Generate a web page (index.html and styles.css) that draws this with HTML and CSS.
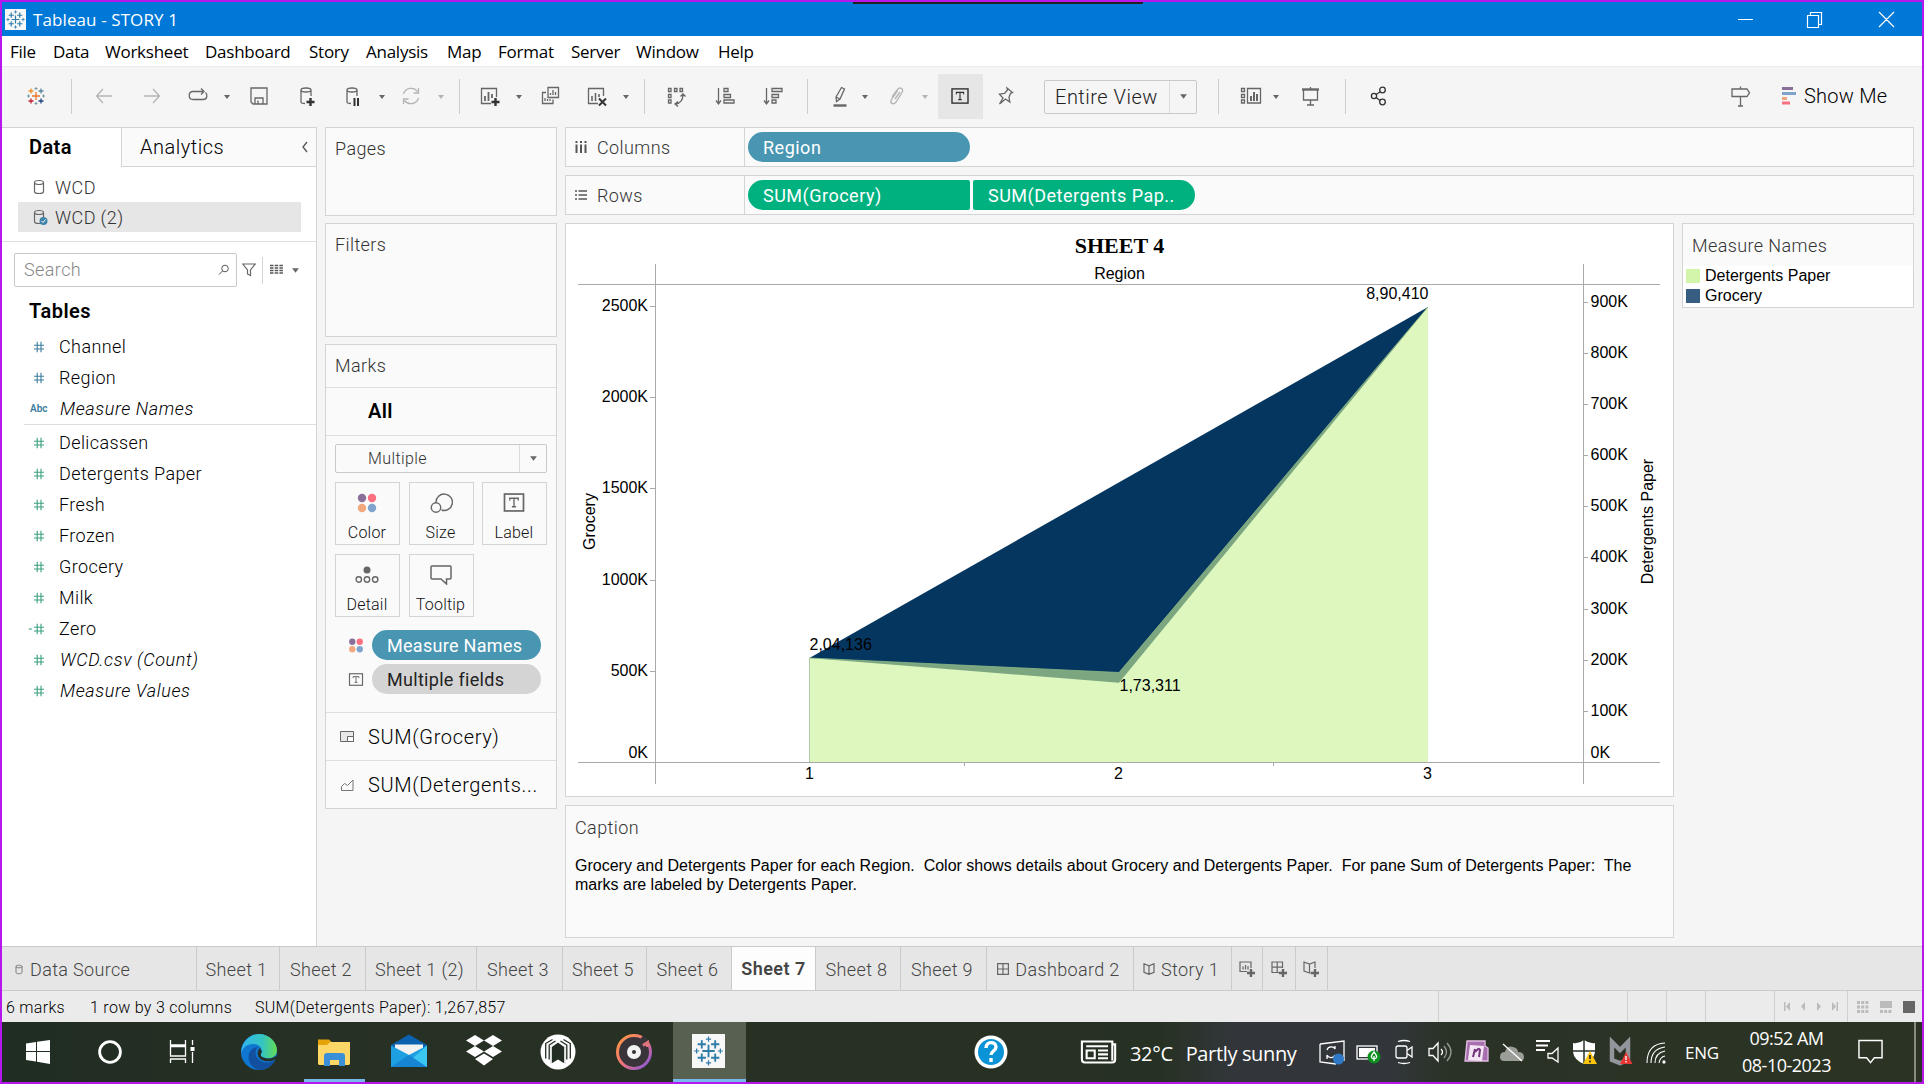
FILE: index.html
```html
<!DOCTYPE html>
<html lang="en">
<head>
<meta charset="utf-8">
<title>Tableau - STORY 1</title>
<link rel="stylesheet" href="styles.css">
</head>
<body>
<svg width="0" height="0" class="defs">
  <defs>
    <symbol id="caret" viewBox="0 0 8 6"><path d="M1 1h6L4 5z" fill="currentColor"/></symbol>
    <symbol id="hash" viewBox="0 0 12 12"><path d="M1 4.2h10M1 8h10M4.2 .8v10.4M8 .8v10.4" fill="none" stroke="currentColor" stroke-width="1.1"/></symbol>
    <symbol id="cyl" viewBox="0 0 12 16"><path d="M1.5 3.5v9c0 1.2 2 2 4.500 2s4.500-.8 4.500-2v-9M1.500 3.500c0-1.200 2-2 4.500-2s4.500.8 4.500 2-2 2-4.500 2-4.500-.8-4.500-2z" fill="none" stroke="currentColor" stroke-width="1.200"/></symbol>
    <symbol id="tbox" viewBox="0 0 20 18"><rect x="1" y="1" width="18" height="16" fill="none" stroke="currentColor" stroke-width="1.600"/><path d="M6 7V5h8v2M10 5v8M8 13h4" fill="none" stroke="currentColor" stroke-width="1.300"/></symbol>
    <symbol id="dots" viewBox="0 0 20 20"><circle cx="5" cy="5" r="4.200" fill="#8a7099"/><circle cx="15" cy="5" r="4.200" fill="#fa7080"/><circle cx="5" cy="15" r="4.200" fill="#f2a77e"/><circle cx="15" cy="15" r="4.200" fill="#80a3cc"/></symbol>
    <symbol id="mark" viewBox="-16 -16 32 32"><path d="M0-6V6M-6 0H6M-6.500-10.500v8M-10.500-6.500h8M6.500-10.500v8M2.500-6.500h8M-6.500 2.500v8M-10.500 6.500h8M6.500 2.500v8M2.500 6.500h8" fill="none" stroke="#2f7ca8" stroke-width="1.800"/><path d="M0-14v5M-2.500-11.500h5M0 9v5M-2.500 11.500h5M-11.500-2.500v5M-14 0h5M11.500-2.500v5M9 0h5" fill="none" stroke="#2f7ca8" stroke-width="1.200"/></symbol>
  </defs>
</svg>

<div class="window">
  <header class="titlebar">
    <svg class="app-icon" width="21" height="21" viewBox="0 0 21 21"><rect width="21" height="21" fill="#f8f8f8"/><use href="#mark" x="0" y="0" width="21" height="21"/></svg>
    <span class="app-title">Tableau - STORY 1</span>
    <svg class="controls" width="170" height="24" viewBox="0 0 170 24" fill="none" stroke="#fff" stroke-width="1.200"><path d="M2 12.500h15M71.500 8.500h11v12h-11zM74.500 8V5.500h11v12H83M143 5l15 15M158 5l-15 15"/></svg>
    <i class="notch"></i>
  </header>

  <nav class="menu"><span>File</span><span>Data</span><span>Worksheet</span><span>Dashboard</span><span>Story</span><span>Analysis</span><span>Map</span><span>Format</span><span>Server</span><span>Window</span><span>Help</span></nav>

  <div class="toolbar">
    <svg viewBox="0 0 24 24" fill="none" stroke-width="1.400"><path d="M12 8v8M8 12h8" stroke="#e8762c"/><path d="M7 4.500v5M4.500 7h5" stroke="#eb912c"/><path d="M17 4.500v5M14.500 7h5" stroke="#59879b"/><path d="M7 14.500v5M4.500 17h5" stroke="#c72035"/><path d="M17 14.500v5M14.500 17h5" stroke="#1f457e"/><path d="M12 3v3M10.500 4.500h3M12 18v3M10.500 19.500h3M4.500 10.500v3M3 12h3M19.500 10.500v3M18 12h3" stroke="#7199a6" stroke-width="1"/></svg>
    <i class="sep"></i>
    <svg class="dim" viewBox="0 0 24 24" stroke-width="2"><path d="M20 12H5M11 5l-6.500 7L11 19"/></svg>
    <svg class="dim" viewBox="0 0 24 24" stroke-width="2"><path d="M4 12h15M13 5l6.500 7L13 19"/></svg>
    <svg viewBox="0 0 24 24"><path d="M7 7.500h10M15 4.500l3 3-3 3M7 7.500c-5 0-5 8 0 8h10c4.500 0 4.800-5 2.500-7"/></svg>
    <svg class="caret"><use href="#caret"/></svg>
    <svg viewBox="0 0 24 24"><path d="M4 4h16v16H6l-2-2zM8 20v-6h8v6M11 16.500V20"/></svg>
    <svg viewBox="0 0 24 24"><path d="M6 6v12c0 1 2 1.500 4 1.500M16 6v6M6 6c0-1.300 2-2 5-2s5 .7 5 2-2 2-5 2-5-.7-5-2z"/><path d="M11.500 18h8M15.500 14v8" stroke="#333" stroke-width="2.400"/></svg>
    <svg viewBox="0 0 24 24"><path d="M6 6v12c0 1 2 1.500 4 1.500M16 6v6M6 6c0-1.300 2-2 5-2s5 .7 5 2-2 2-5 2-5-.7-5-2z"/><path d="M13.500 14v8M17 14v8" stroke="#333" stroke-width="2"/></svg>
    <svg class="caret"><use href="#caret"/></svg>
    <svg class="dim" viewBox="0 0 24 24"><path d="M4.500 10A8 8 0 0 1 18.500 7.500M19.500 14A8 8 0 0 1 5.500 16.500M19.500 4v5h-5M4.500 20v-5h5"/></svg>
    <svg class="caret dim"><use href="#caret"/></svg>
    <i class="sep"></i>
    <svg viewBox="0 0 24 24"><path d="M13 19.500H3.500V4.500h15V13"/><path d="M7 17v-5M10.500 17V8M14 14v-4" stroke-width="1.800"/><path d="M13.500 18h8M17.500 14v8" stroke="#333" stroke-width="2.400"/></svg>
    <svg class="caret"><use href="#caret"/></svg>
    <svg viewBox="0 0 24 24"><path d="M10 3.500h10.500v10H10zM8 8.500H4.500v11H15V15.500M12.500 11V9M15 11V6M17.500 11V8M7 17v-3M9.500 17v-2M12 17v-2"/></svg>
    <svg viewBox="0 0 24 24"><path d="M13 19.500H3.500V4.500h15V12"/><path d="M7 17v-5M10.500 17V9M14 13v-3" stroke-width="1.600"/><path d="M14 14.500l7 7M21 14.500l-7 7" stroke="#333" stroke-width="2"/></svg>
    <svg class="caret"><use href="#caret"/></svg>
    <i class="sep"></i>
    <svg viewBox="0 0 24 24"><path d="M4.500 4.500h2.500v3h-2.500zM10.500 4.500h2.500v3h-2.500zM16 4.500h2.500v3H16zM4.500 10.500h2.500v3h-2.500zM4.500 16h2.500v3h-2.500zM19 11c0 5-3 8.500-7 9M16.500 12.500L19 10l2.500 2.500M14 17.500L11 20l3 2.500"/></svg>
    <svg viewBox="0 0 24 24"><path d="M5.500 4v15M3 16.500L5.500 20 8 16.500M11 4.500h4v3h-4zM11 10.500h6.500v3H11zM11 16h10v3H11z"/></svg>
    <svg viewBox="0 0 24 24"><path d="M5.500 4v15M3 16.500L5.500 20 8 16.500M11 4.500h10v3H11zM11 10.500h6.500v3H11zM11 16h4v3h-4z"/></svg>
    <i class="sep"></i>
    <svg viewBox="0 0 24 24"><path d="M8 13L13.500 3.500l3 1.500L12 15l-3.500 2.500zM8 13l4 2"/><path d="M5.500 21.500h13" stroke-width="2.400"/></svg>
    <svg class="caret"><use href="#caret"/></svg>
    <svg class="dim" viewBox="0 0 24 24"><path d="M7 13l5.500-7.500c3-3.500 6.500 0 4.500 3L11 18c-3 3.500-6.500 1-4.500-2.500L12.500 7M10 15l5-7"/></svg>
    <svg class="caret dim"><use href="#caret"/></svg>
    <span class="tool-on"><svg viewBox="0 0 20 18"><use href="#tbox"/></svg></span>
    <svg viewBox="0 0 24 24"><path d="M14 4l5.500 4.500-2 .8-1.500 4 .8 4.700-4.300-3L6.500 20l3.500-6-3.500-3.800 5-.7L14.500 6z"/></svg>
    <div class="fit"><span>Entire View</span><b><svg class="caret big"><use href="#caret"/></svg></b></div>
    <i class="sep"></i>
    <svg viewBox="0 0 24 24"><path d="M3.500 4.500h3v3h-3zM3.500 10.500h3v3h-3zM3.500 16h3v3h-3zM9.500 4.500h13v14.500h-13z"/><path d="M13 17v-5M16 17V8M19 17v-7" stroke-width="2"/></svg>
    <svg class="caret"><use href="#caret"/></svg>
    <svg viewBox="0 0 24 24"><path d="M5.500 6v10h14V6M12.500 16v4.500M9 21h7M12.500 3v2"/><path d="M4 5.500h17" stroke-width="2.400"/></svg>
    <i class="sep"></i>
    <svg viewBox="0 0 24 24" class="dark"><circle cx="8" cy="12" r="2.600"/><circle cx="16.500" cy="6" r="2.800"/><circle cx="16.500" cy="18" r="2.800"/><path d="M10 10.500L14 8M10 13.500l4 3"/></svg>
    <svg viewBox="0 0 24 24"><path d="M4 5h15l2.500 3.800L19 12.500H4zM12.500 2.500V5M12.500 12.500V22M10 22h5"/></svg>
    <div class="showme"><svg viewBox="0 0 14 18"><path d="M0 1.500h11" stroke="#8a7099"/><path d="M0 6.500h14" stroke="#80a3cc"/><path d="M0 11.500h5" stroke="#f2a77e"/><path d="M0 16h8" stroke="#fa7080"/></svg><span>Show Me</span></div>
  </div>

  <main class="work">
    <aside class="side">
      <div class="side-tabs"><b>Data</b><span>Analytics<svg width="8" height="12" viewBox="0 0 8 12"><path d="M6 1L2 6l4 5" fill="none" stroke="#555" stroke-width="1.300"/></svg></span></div>
      <div class="sources">
        <div class="source"><svg width="12" height="16"><use href="#cyl"/></svg>WCD</div>
        <div class="source picked"><svg width="16" height="17" viewBox="0 0 16 17"><use href="#cyl" width="12" height="16"/><circle cx="10.500" cy="12" r="4" fill="#3d84a8"/><path d="M8.500 12l1.500 1.500 2.500-3" stroke="#fff" fill="none"/></svg>WCD (2)</div>
      </div>
      <div class="search-row">
        <div class="search"><span>Search</span><svg width="12" height="12" viewBox="0 0 12 12" fill="none" stroke="#555"><circle cx="7" cy="4.500" r="3.300"/><path d="M4.500 7L1 10.500"/></svg></div>
        <svg width="14" height="14" viewBox="0 0 14 14"><path d="M.8 1h12.400L8.500 7v5.500l-3-1.500V7z" fill="none" stroke="#666" stroke-width="1.200"/></svg>
        <i></i>
        <svg width="13" height="12" viewBox="0 0 13 12"><path d="M0 1.500h13M0 4h13M0 6.500h13M0 9h13" stroke="#555" stroke-width="1.300" stroke-dasharray="3.500 1.200"/></svg>
        <svg class="caret big"><use href="#caret"/></svg>
      </div>
      <h2>Tables</h2>
      <ul class="fields dims">
        <li><svg><use href="#hash"/></svg>Channel</li>
        <li><svg><use href="#hash"/></svg>Region</li>
        <li><small>Abc</small><em>Measure Names</em></li>
      </ul>
      <ul class="fields measures">
        <li><svg><use href="#hash"/></svg>Delicassen</li>
        <li><svg><use href="#hash"/></svg>Detergents Paper</li>
        <li><svg><use href="#hash"/></svg>Fresh</li>
        <li><svg><use href="#hash"/></svg>Frozen</li>
        <li><svg><use href="#hash"/></svg>Grocery</li>
        <li><svg><use href="#hash"/></svg>Milk</li>
        <li class="calc"><svg><use href="#hash"/></svg>Zero</li>
        <li><svg><use href="#hash"/></svg><em>WCD.csv (Count)</em></li>
        <li><svg><use href="#hash"/></svg><em>Measure Values</em></li>
      </ul>
    </aside>

    <section class="cards">
      <div class="card pages">Pages</div>
      <div class="card filters">Filters</div>
      <div class="card marks">
        <div class="marks-head">Marks</div>
        <div class="marks-all">All</div>
        <div class="mark-type"><span>Multiple</span><b><svg class="caret big"><use href="#caret"/></svg></b></div>
        <div class="mark-grid">
          <div><svg width="20" height="20"><use href="#dots"/></svg>Color</div>
          <div><svg width="24" height="22" viewBox="0 0 24 22" fill="none" stroke="#666" stroke-width="1.400"><path d="M7 10.500A8.200 8.200 0 1 1 12.500 18"/><circle cx="7" cy="15.500" r="4.700"/></svg>Size</div>
          <div><svg width="22" height="19"><use href="#tbox"/></svg>Label</div>
          <div><svg width="24" height="18" viewBox="0 0 24 18" fill="none" stroke="#666" stroke-width="1.400"><circle cx="12" cy="4" r="3.500" fill="#666" stroke="none"/><circle cx="3.800" cy="13.500" r="2.700"/><circle cx="12" cy="13.500" r="2.700"/><circle cx="20.200" cy="13.500" r="2.700"/></svg>Detail</div>
          <div><svg width="22" height="20" viewBox="0 0 22 20" fill="none" stroke="#666" stroke-width="1.500"><path d="M2 1h18a1 1 0 0 1 1 1v11a1 1 0 0 1-1 1h-3.500v5L11 14H2a1 1 0 0 1-1-1V2a1 1 0 0 1 1-1z"/></svg>Tooltip</div>
        </div>
        <div class="mark-pills">
          <div><svg width="15" height="15"><use href="#dots"/></svg><span class="pill blue">Measure Names</span></div>
          <div><svg width="14" height="13"><use href="#tbox"/></svg><span class="pill gray">Multiple fields</span></div>
        </div>
        <div class="mark-sub"><svg width="14" height="11" viewBox="0 0 14 11" fill="#e8e8e8" stroke="#666"><path d="M.5.500h13v10H.500z"/><path d="M7.500 10.500v-5h6v5z" fill="#fff"/></svg>SUM(Grocery)</div>
        <div class="mark-sub"><svg width="14" height="12" viewBox="0 0 14 12" fill="none" stroke="#777"><path d="M1.500 11.500V7.500l3-3 3 2 5.500-5.500v10.500z"/></svg>SUM(Detergents...</div>
      </div>
    </section>

    <section class="canvas">
      <div class="card shelf"><div><svg width="12" height="12" viewBox="0 0 12 12" stroke="#555" stroke-width="2" stroke-dasharray="2 1.500 9"><path d="M1.500 0v12M6 0v12M10.500 0v12"/></svg>Columns</div><span class="pill blue wide">Region</span></div>
      <div class="card shelf"><div><svg width="12" height="10" viewBox="0 0 12 10" stroke="#555" stroke-width="1.600" stroke-dasharray="2 1.500 9"><path d="M0 1h12M0 5h12M0 9h12"/></svg>Rows</div><span class="pill green wide first">SUM(Grocery)</span><span class="pill green wide last">SUM(Detergents Pap..</span></div>
      <div class="view">
        <div class="view-main">
          <svg class="chart" width="1109" height="574" viewBox="565 223 1109 574">
            <rect x="565.500" y="223.500" width="1108" height="573" fill="#fff" stroke="#d4d4d4"/>
            <path d="M809.500 658L1428 307V762H809.500z" fill="#05365f"/>
            <path d="M809.500 658L1119 672.500 1428 307V762H809.500z" fill="#7ba680"/>
            <path d="M809.500 658L1119 682.800 1428 307V762H809.500z" fill="#ddf7bf"/>
            <path d="M809.500 658L1119 672.500 1428 307" fill="none" stroke="#8fbc86" stroke-width=".8"/>
            <g stroke="#a9a9a9" fill="none"><path d="M578 284.500h1082M578 762.500h1082M655.500 264v520M1583.500 264v520"/>
            <path d="M650 306.500h5M650 397.500h5M650 488.500h5M650 580.500h5M650 671.500h5M1584 302.500h4M1584 353.500h4M1584 404.500h4M1584 455.500h4M1584 506.500h4M1584 557.500h4M1584 609.500h4M1584 660.500h4M1584 711.500h4M964.500 763v3M1273.500 763v3"/></g>
            <text x="1119.500" y="252.500" text-anchor="middle" class="sheet-title">SHEET 4</text>
            <g text-anchor="middle"><text x="1119.500" y="279">Region</text><text x="809.500" y="779">1</text><text x="1118.500" y="779">2</text><text x="1427.500" y="779">3</text>
            <text transform="translate(595 521.500) rotate(-90)">Grocery</text><text transform="translate(1653 521.500) rotate(-90)">Detergents Paper</text></g>
            <g text-anchor="end"><text x="648" y="311">2500K</text><text x="648" y="402">2000K</text><text x="648" y="493">1500K</text><text x="648" y="585">1000K</text><text x="648" y="676">500K</text><text x="648" y="758">0K</text><text x="1428.500" y="299">8,90,410</text></g>
            <g><text x="1590.500" y="307">900K</text><text x="1590.500" y="358">800K</text><text x="1590.500" y="409">700K</text><text x="1590.500" y="460">600K</text><text x="1590.500" y="511">500K</text><text x="1590.500" y="562">400K</text><text x="1590.500" y="614">300K</text><text x="1590.500" y="665">200K</text><text x="1590.500" y="716">100K</text><text x="1590.500" y="758">0K</text><text x="809.500" y="650">2,04,136</text><text x="1119.500" y="691">1,73,311</text></g>
          </svg>
          <div class="card caption"><h3>Caption</h3><p>Grocery and Detergents Paper for each Region.&nbsp; Color shows details about Grocery and Detergents Paper.&nbsp; For pane Sum of Detergents Paper:&nbsp; The<br>marks are labeled by Detergents Paper.</p></div>
        </div>
        <div class="card legend"><h3>Measure Names</h3><div><i class="lime"></i>Detergents Paper</div><div><i class="navy"></i>Grocery</div></div>
      </div>
    </section>
  </main>

  <div class="tabs">
    <span><svg width="8" height="11" viewBox="0 0 12 16"><use href="#cyl"/></svg>Data Source</span><span>Sheet 1</span><span>Sheet 2</span><span>Sheet 1 (2)</span><span>Sheet 3</span><span>Sheet 5</span><span>Sheet 6</span><span class="active">Sheet 7</span><span>Sheet 8</span><span>Sheet 9</span>
    <span class="ic"><svg width="12" height="12" viewBox="0 0 12 12"><path d="M.6.6h10.800v10.800H.600zM6 .6v10.800M.6 6h10.800"/></svg>Dashboard 2</span>
    <span class="ic"><svg width="12" height="12" viewBox="0 0 12 12"><path d="M1 .8l5 2 5-2v8.500l-5 2-5-2zM6 3v8"/></svg>Story 1</span>
    <span class="add"><svg width="17" height="17" viewBox="0 0 17 17"><path d="M8 10.500H1V1h11v6M4 8.500v-3M6.500 8.500V4M9 8.500V5"/><path d="M8 12h8M12 8v8" class="plus"/></svg></span>
    <span class="add"><svg width="17" height="17" viewBox="0 0 17 17"><path d="M8 11.500H1V1h10.500v6M6.200 1v10M1 6.200h10.500"/><path d="M8 12h8M12 8v8" class="plus"/></svg></span>
    <span class="add"><svg width="17" height="17" viewBox="0 0 17 17"><path d="M8 12L6.500 12 1 10V1l5.500 2L12 1v6M6.500 3v9"/><path d="M8 12h8M12 8v8" class="plus"/></svg></span>
  </div>

  <footer class="status">
    <span>6 marks</span><span>1 row by 3 columns</span><span>SUM(Detergents Paper): 1,267,857</span>
    <i></i><i></i><i></i><i></i>
    <i><svg width="54" height="9" viewBox="0 0 54 9" fill="#bbb"><path d="M0 0h1.500v9H0zM6 0v9L2 4.500zM21 0v9l-4-4.500zM33 0v9l4-4.500zM48 0v9l4-4.500zM52.500 0H54v9h-1.500z"/></svg></i>
    <i class="modes"><svg width="58" height="12" viewBox="0 0 58 12"><path d="M0 1.600h12M0 6h12M0 10.400h12" stroke="#bbb" stroke-width="3" stroke-dasharray="3 1.200"/><path d="M23 0h12v7H23z" fill="#bbb"/><path d="M23 10.400h12" stroke="#bbb" stroke-width="3" stroke-dasharray="3 1.200"/><path d="M46 0h12v12H46z" fill="#666"/></svg></i>
  </footer>

  <div class="taskbar">
    <svg viewBox="-20 -20 40 40" fill="#fff"><path d="M-12-8.500L-2-10V-1H-12zM-1-10.200L12-12V-1H-1zM-12 0H-2V9.500L-12 8zM-1 0H12V12L-1 9.800z"/></svg>
    <svg viewBox="-20 -20 40 40" fill="none" stroke="#fff" stroke-width="2.800"><circle r="10.400"/></svg>
    <svg viewBox="-20 -20 40 40" fill="none" stroke="#fff" stroke-width="1.300"><path d="M-11.500-12v5H3.500v-5M-11.500 11V7H3.500v4M-11.500-5.500H3.500v9.500h-15zM10.500-12V-7M10.500 0v11"/><path d="M8.500-5h4v4h-4z" fill="#fff" stroke="none"/></svg>
    <svg viewBox="-20 -20 40 40"><defs><linearGradient id="eg" x1="0" x2="1"><stop offset="0" stop-color="#32b4ef"/><stop offset=".6" stop-color="#35c5c0"/><stop offset="1" stop-color="#62dd52"/></linearGradient></defs><circle r="18" fill="#0f77d0"/><path d="M-17.900 2C-18-10-9-18 0-18 10-18 18-10 18-2 18 4 13 7 7 6 1 5 1 3 3 0 3-6-2-8-6-8-12-8-17-4-17.900 2z" fill="url(#eg)"/><path d="M-10 2C-8-4-3-5-1-5-6 0-3 8 4 10c5 1.500 9 0 12-2C13 15 6 18 1 18-7 17-12 9-10 2z" fill="#124f9e"/><path d="M1-4C-3 0-2 6 4 8.500c5 1.500 8 1 12-1 3-1 3 1 2 3L16 14 19 6 17 4C13 7 9 7 6 6 1 5 1 2 3 0z" fill="#263024"/></svg>
    <svg viewBox="-20 -20 40 40"><path d="M-16-12.500h11l3 3h14q4 0 4 4V11q0 2-2 2h-28q-2 0-2-2z" fill="#e5a50a"/><path d="M-16-7h9l3-3H16V11q0 2-2 2h-28q-2 0-2-2z" fill="#ffd766"/><path d="M-10 14V4q0-3 3-3H8q3 0 3 3v10H5V8H-4v6z" fill="#3a8fd8"/></svg>
    <svg viewBox="-20 -20 40 40"><path d="M-18-7L0-17.500 18-7V15H-18z" fill="#0a62ae"/><path d="M-14-7.500H14V6H-14z" fill="#f2f2f2"/><path d="M-18-6.500L0 3 18-6.500V15H-18z" fill="#1d9fe2"/><path d="M18-6.500L-6 15H18z" fill="#3cc6f2"/><path d="M-18 15L0 3 18 15z" fill="#1686d4"/></svg>
    <svg viewBox="-20 -20 40 40" fill="#fff"><path d="M-9-17L0-11.500-9-6-18-11.500zM9-17L18-11.500 9-6 0-11.500zM-9-6L0-.5-9 5-18-.5zM9-6L18-.5 9 5 0-.5zM0 1.500L9 7 0 13.500-9 7z"/></svg>
    <svg viewBox="-20 -20 40 40" fill="none" stroke="#222d23"><circle r="17.500" fill="#fff" stroke="none"/><path d="M-7.500 12V-6L0-11 7.500-6V12L0 7.500z" fill="#222d23" stroke="none"/><path d="M-7 12.500V-5.500L0-10.500 7-5.500V12.500" stroke="#fff" stroke-width="1.600"/><path d="M-8.800 7.500V-7L-2.500-11M-12.300 6.500V-8.500L-5.500-12.500M8.800 7.500V-7L2.500-11M12.300 6.500V-8.500L5.500-12.500" stroke-width="1.300"/></svg>
    <svg viewBox="-20 -20 40 40"><defs><linearGradient id="gr" x2="1" y2="1"><stop stop-color="#ff9a3d"/><stop offset=".5" stop-color="#f0737b"/><stop offset="1" stop-color="#7a55e0"/></linearGradient></defs><circle r="16.500" fill="#39343a" stroke="url(#gr)" stroke-width="3"/><path d="M8-15L14-9" stroke="#39343a" stroke-width="4"/><circle r="7" fill="#f3f3f3"/><circle r="2" fill="#333"/><path d="M9-6.500L13.500-9.500V-5" stroke="#e0737b" stroke-width="3" fill="none"/></svg>
    <span class="task-on"><svg viewBox="0 0 33 34"><rect width="33" height="34" fill="#f7f7f7"/><use href="#mark" x="0" y="0" width="33" height="34"/></svg></span>
    <svg viewBox="-20 -20 40 40"><circle r="16.500" fill="#fff"/><circle r="13" fill="#0b93d8"/><path d="M-5-4c0-7 10-7 10-1 0 4-5 4-5 8M0 6v4" fill="none" stroke="#fff" stroke-width="3.400"/></svg>
    <svg class="news" viewBox="0 0 40 26" fill="none" stroke="#fff" stroke-width="2.200"><path d="M34 5h3v16q0 3-3 3H5q-3 0-3-3V2h32v20M6.500 7h23M7 11.500h8.500v8H7zM19 11.500h10.500M19 15.500h10.500M19 19.500h10.500"/></svg>
    <span class="weather"><span>32°C</span><span>Partly sunny</span></span>
    <div class="tray">
      <svg viewBox="-18 -18 36 36"><path d="M-12-8L12-11V9M-12-8V10L4 12M-5-2c1-4 7-4 8-1V-6M3 3C1 7-4 6-5 3V7"/><circle cx="6.500" cy="7" r="5.500" fill="#2e78c6" stroke="none"/></svg>
      <svg viewBox="-18 -18 36 36"><rect x="-11" y="-6" width="20" height="13"/><path d="M-9-4H7V5H-9z" fill="#fff" stroke="none"/><circle cx="6" cy="5" r="6.500" fill="#0d9020" stroke="none"/><path d="M6 9V4M6 0c-4 5-3 6 0 7 3-1 4-2 0-7z"/></svg>
      <svg viewBox="-18 -18 36 36"><rect x="-8" y="-6" width="11" height="12" rx="2"/><path d="M3-1.500L8-5V5L3 1.500M-6-10.500q6-2 12 0M-6 10.500q6 2 12 0"/></svg>
      <svg viewBox="-18 -18 36 36"><path d="M-11-3.500h4L-2-9V9L-7 3.500h-4zM1-3q3 3 0 6"/><path d="M4-6q5 6 0 12M7-9q8 9 0 18" opacity=".5"/></svg>
      <svg viewBox="-18 -18 36 36"><path d="M-9-11H9V-6L12-4V9H-11z" fill="#a86fae" stroke="#e3bfe6"/><path d="M-6-7L8-6 6 9-8 8z" fill="#f4e6f5" stroke="none"/><path d="M-3 5L-1-3M-1 0Q3-5 4-2L3 5" stroke="#74357c" stroke-width="2"/></svg>
      <svg viewBox="-18 -18 36 36"><path d="M-12 5q0-5 5-5 2-7 8-5 5 1 5 5 6 0 6 5 0 4-4 4H-8q-4 0-4-4z" fill="#9a9d98" stroke="none"/><path d="M-9-8L10 9"/></svg>
      <svg viewBox="-18 -18 36 36"><path d="M-12-11H2M-12-6.500H0M-12-2H-3" stroke-width="2"/><path d="M0 1.500h4L10-4V10L4 6H0z"/></svg>
      <svg viewBox="-18 -18 36 36"><path d="M0-12q6 4 11 3V0Q10 8 0 12-10 8-11 0V-9Q-5-8 0-12z" fill="#fff" stroke="none"/><path d="M0-12V12M-11-1H11" stroke="#29342a" stroke-width="1.500"/><path d="M6-1L13 12H-1z" fill="#fdc50c" stroke="none"/><path d="M6 3v4M6 8.500v2" stroke="#222" stroke-width="1.600"/></svg>
      <svg viewBox="-18 -18 36 36"><path d="M-8-10V8L0 11 8 8V-10L0-2z" stroke="#92969a" stroke-width="4.500"/><path d="M6 0L12.500 12H0z" fill="#e53535" stroke="none"/><path d="M6 4v4M6 9v1.500"/></svg>
      <svg viewBox="-18 -18 36 36"><path d="M-9 11Q-9-8 9-9M-5 11Q-5-3 9-5M-1 11Q-1 1 9-1M3 11Q4 5 9 4" stroke-width="1.100"/><circle cx="8" cy="10" r="1" fill="#fff"/></svg>
    </div>
    <span class="lang">ENG</span>
    <span class="clock"><span>09:52 AM</span><span>08-10-2023</span></span>
    <svg class="note" viewBox="0 0 26 26" fill="none" stroke="#fff" stroke-width="1.500"><path d="M1 1h24v18h-8l-4 5-4-5H1z"/></svg>
    <i class="peek"></i>
  </div>
</div>
</body>
</html>
```
FILE: styles.css
```css
* { box-sizing: border-box; }
body { margin: 0; font-family: Roboto, "Liberation Sans", sans-serif; font-size: 18px; color: #000; }
h2, h3, p, ul { margin: 0; padding: 0; font-weight: normal; }
i { font-style: normal; }
svg { display: block; flex: none; }
.defs { position: absolute; }
.window { width: 1924px; height: 1084px; border: 2px solid #b517ec; display: grid; grid-template-rows: 34px 30px 61px 819px 45px 31px 60px; background: #f5f5f5; overflow: hidden; }

.titlebar { position: relative; background: #0078d7; color: #fff; display: flex; align-items: center; padding-left: 3px; font: 17px "Open Sans", sans-serif; }
.app-title { margin-left: 7px; letter-spacing: 0.1px; }
.controls { margin-left: auto; margin-right: 16px; }
.notch { position: absolute; left: 851px; top: 0; width: 290px; height: 2px; background: #222; }

.menu { background: #fff; display: grid; grid-template-columns: 43px 52px 100px 104px 57px 81px 51px 73px 65px 82px 60px; padding: 1px 0 0 8px; align-items: center; font: 17px "Open Sans", sans-serif; letter-spacing: -0.25px; white-space: nowrap; }

.toolbar { border-top: 1px solid #ececec; background: #f5f5f5; display: grid; align-items: center; padding: 0 0 1px 22px; grid-template-columns: 47px 21px 48px 46px 37px 24px 48px 46px 37px 21px 38px 22px 19px 37px 23px 47px 37px 22px 20px 49px 48px 46px 21px 33px 24px 36px 17px 55px 51px 174px 20px 34px 26px 47px 21px 362px 54px 130px; }
.toolbar > svg { width: 24px; height: 24px; fill: none; stroke: #666; stroke-width: 1.3; margin-bottom: 2px; }
.toolbar > svg.dim { stroke: #b4b4b4; }
.toolbar > svg.dark { stroke: #333; }
svg.caret, .toolbar > svg.caret { width: 8px; height: 6px; color: #666; stroke: none; margin: 0; }
.toolbar > svg.caret.dim { color: #b4b4b4; }
svg.caret.big { width: 9px; height: 7px; }
.sep { width: 1px; height: 35px; background: #cdcdcd; }
.tool-on { width: 45px; height: 45px; background: #e6e6e6; display: grid; place-items: center; color: #333; padding: 0 2px 2px 0; }
.tool-on svg { width: 18px; height: 16px; }
.fit { width: 153px; height: 34px; border: 1px solid #c9c9c9; border-radius: 2px; display: flex; align-items: center; font-size: 20px; font-weight: 300; color: #222; padding-left: 10px; letter-spacing: .5px; }
.fit b, .mark-type b { margin-left: auto; width: 27px; height: 100%; border-left: 1px solid #dcdcdc; display: grid; place-items: center; }
.showme { display: flex; align-items: center; gap: 8px; font-size: 20px; font-weight: 350; letter-spacing: .25px; padding-bottom: 2px; }
.showme svg { width: 14px; height: 18px; stroke-width: 3; }

.work { display: grid; grid-template-columns: 316px 232px 1349px; column-gap: 7px; }
.side { background: #fff; border: solid #d4d4d4; border-width: 1px 1px 0 0; margin-right: 1px; }
.side-tabs { display: grid; grid-template-columns: 119px 1fr; height: 39px; font-size: 20px; }
.side-tabs b { padding: 7px 0 0 27px; font-weight: 600; letter-spacing: .4px; }
.side-tabs span { background: #fafafa; border: solid #d4d4d4; border-width: 0 0 1px 1px; display: flex; align-items: center; justify-content: space-between; padding: 0 7px 0 18px; font-weight: 350; letter-spacing: .5px; }
.sources { padding: 5px 15px 0 16px; height: 75px; border-bottom: 1px solid #e0e0e0; font-weight: 300; }
.source { height: 30px; display: flex; align-items: center; padding-left: 15px; color: #333; letter-spacing: .4px; }
.source svg { margin-right: 10px; color: #666; }
.source.picked { background: #e6e6e6; }
.source.picked svg { margin-right: 6px; }
.search-row { display: flex; align-items: center; height: 34px; margin: 11px 0 0 12px; }
.search { width: 223px; height: 34px; border: 1px solid #c9c9c9; border-radius: 2px; display: flex; justify-content: space-between; align-items: center; padding: 0 6px 1px 9px; color: #888; font-weight: 300; letter-spacing: .4px; margin-right: 5px; }
.search-row i { width: 1px; height: 27px; background: #d4d4d4; margin: 0 7px 0 6px; }
.search-row .caret { margin-left: 8px; }
.side h2 { font-size: 20px; font-weight: 600; line-height: 24px; margin: 12px 0 8px 27px; letter-spacing: .5px; }
.fields { list-style: none; font-weight: 350; letter-spacing: .4px; }
.fields li { height: 31px; display: flex; align-items: center; padding-left: 31px; }
.fields svg { width: 12px; height: 12px; margin-right: 14px; }
.fields small { width: 28px; margin-left: -3px; font-size: 10px; font-weight: 600; letter-spacing: 0; }
.fields small + em { margin-left: 1px; }
.fields em { font-weight: 350; letter-spacing: .6px; padding-left: 1px; }
.dims svg, .dims small { color: #3a7c9c; }
.dims { margin-left: 22px; padding-bottom: 0; border-bottom: 1px solid #dedede; }
.dims li { padding-left: 9px; }
.measures { padding-top: 2px; }
.measures svg { color: #3aa080; }
.calc::before { content: "="; color: #3aa080; font-size: 8px; width: 5px; margin-left: -5px; }

.card { border: 1px solid #d4d4d4; background: #fafafa; color: #333; font-weight: 300; letter-spacing: .4px; }
.cards { display: grid; grid-template-rows: 89px 114px 465px; row-gap: 7px; }
.pages, .filters { padding: 10px 9px; }
.marks { color: #000; }
.marks-head { height: 43px; padding: 10px 9px; border-bottom: 1px solid #dedede; color: #333; }
.marks-all { height: 48px; padding: 11px 42px; border-bottom: 1px solid #dedede; font-size: 20px; font-weight: 600; line-height: 24px; }
.mark-type { width: 212px; height: 29px; margin: 8px 0 9px 9px; border: 1px solid #c9c9c9; border-radius: 2px; display: flex; align-items: center; padding-left: 32px; font-size: 16px; color: #333; }
.mark-grid { display: grid; grid-template-columns: repeat(3, 65px); grid-auto-rows: 63px; gap: 9px 8.500px; margin-left: 9px; font-size: 16px; font-weight: 350; letter-spacing: .2px; }
.mark-grid div { border: 1px solid #d4d4d4; display: grid; grid-template-rows: 39px 20px; place-items: center; color: #111; padding-right: 1px; }
.mark-grid svg { color: #666; margin-bottom: 0; }
.mark-pills { height: 96px; padding-top: 13px; border-bottom: 1px solid #dedede; display: grid; grid-template-rows: 30px 30px; row-gap: 4px; }
.mark-pills div { display: flex; align-items: center; padding-left: 22px; }
.mark-pills svg { width: 16px; color: #666; }
.mark-pills .pill { width: 169px; margin-left: 8px; }
.pill { height: 30px; border-radius: 15px; line-height: 31px; padding-left: 15px; color: #fff; font-weight: 400; white-space: nowrap; letter-spacing: .3px; }
.wide { letter-spacing: .5px; }
.blue { background: #4996b2; }
.green { background: #00b180; }
.gray { background: #d4d4d4; color: #222; }
.mark-sub { height: 47px; display: grid; grid-template-columns: 28px 1fr; align-items: center; padding-left: 14px; font-size: 20px; letter-spacing: .65px; }
.mark-sub + .mark-sub { height: 48px; border-top: 1px solid #dedede; }

.canvas { display: grid; grid-template-rows: 40px 40px 1fr; row-gap: 8px; margin-left: 1px; }
.shelf { display: flex; align-items: center; }
.shelf > div { width: 179px; height: 100%; border-right: 1px solid #d4d4d4; display: flex; align-items: center; gap: 10px; padding-left: 9px; margin-right: 3px; }
.wide { width: 222px; }
.first { border-radius: 15px 2px 2px 15px; }
.last { border-radius: 2px 15px 15px 2px; margin-left: 3px; }
.view { display: grid; grid-template-columns: 1109px 232px; column-gap: 8px; align-items: start; }
.view-main { display: grid; grid-template-rows: 574px 133px; row-gap: 8px; }
.chart text { font: 16px "Liberation Sans", Arial, sans-serif; }
.chart .sheet-title { font: bold 22px "Liberation Serif", serif; }
.caption { padding: 11px 9px; }
.caption p { margin-top: 18px; font: 16px/19px "Liberation Sans", Arial, sans-serif; letter-spacing: 0; color: #000; white-space: nowrap; }
.caption h3, .legend h3 { font-size: 18px; font-weight: 300; line-height: 21px; }
.legend { height: 85px; background: #fff; font: 16px "Liberation Sans", Arial, sans-serif; color: #000; }
.legend h3 { font-family: Roboto, sans-serif; height: 42px; padding: 11px 9px; background: #fafafa; color: #333; letter-spacing: .4px; }
.legend div { height: 20px; display: flex; align-items: center; gap: 5px; padding-left: 3px; letter-spacing: 0; }
.legend i { width: 14px; height: 14px; }
.lime { background: #d2f5a9; }
.navy { background: #375d82; }

.tabs { display: grid; grid-template-columns: 195px 83px 86px 111px 86px 84px 85px 84px 85px 86px 147px 98px 31px 33px 32px; background: #e6e6e6; border: solid #cacaca; border-width: 1px 0; color: #444; font-weight: 300; letter-spacing: .35px; }
.tabs span { border-right: 1px solid #cacaca; display: flex; align-items: center; justify-content: center; white-space: nowrap; padding: 1px 3px 0 0; }
.tabs span:first-child { justify-content: flex-start; padding-left: 13px; gap: 7px; }
.tabs .active { background: #fdfdfd; font-weight: 600; letter-spacing: .5px; padding: 0; }
.tabs .ic { gap: 6px; }
.tabs .add { padding: 2px 0 0; }
.tabs svg { fill: none; stroke: #666; stroke-width: 1.2; color: #666; }
.tabs svg .plus { stroke-width: 2.4; }

.status { background: #ebebeb; display: grid; grid-template-columns: 84px 165px 1183px 189px 39px 39px 69px 73px 75px; align-items: center; padding-left: 4px; font-size: 16px; font-weight: 350; letter-spacing: .3px; color: #000; }
.status span { padding-top: 1px; }
.status i { height: 100%; border-left: 1px solid #cfcfcf; display: grid; place-items: center; }
.status .modes { padding-left: 2px; }

.taskbar { display: grid; grid-template-columns: 72px 72px 77px 75px 75px 75px 74px 76px 59px 298px 109px 50px 184px 371px 57px 116px 56px 4px; padding-left: 16px; align-items: center; color: #fff; font-family: "Open Sans", sans-serif; background: linear-gradient(90deg, #202d23 0, #273024 300px, #273123 1160px, #32363a 1230px, #32363a 1390px, #293225 1450px, #2b3424); }
.taskbar > svg { width: 40px; height: 40px; }
.taskbar > svg:nth-child(5) { height: 60px; width: 61px; margin-left: -10px; border-bottom: 3px solid #76b9ed; padding: 10px 11px 7px 10px; }
.task-on { width: 73px; height: 60px; background: #586052; border-bottom: 3px solid #76b9ed; display: grid; place-items: center; padding-right: 3px; }
.task-on svg { width: 33px; height: 34px; }
.taskbar > svg.news { width: 38px; height: 26px; }
.weather { font-size: 20px; display: flex; gap: 13px; letter-spacing: -.35px; white-space: nowrap; padding-top: 3px; }
.tray { display: flex; }
.tray svg { width: 36px; height: 36px; fill: none; stroke: #fff; stroke-width: 1.3; }
.lang { font-size: 17px; letter-spacing: -.3px; }
.clock { width: 84px; display: grid; line-height: 27.500px; font-size: 18px; letter-spacing: -.5px; justify-items: center; white-space: nowrap; }
.taskbar > svg.note { width: 25px; height: 26px; }
.peek { width: 2px; height: 60px; background: #868b83; }
```
